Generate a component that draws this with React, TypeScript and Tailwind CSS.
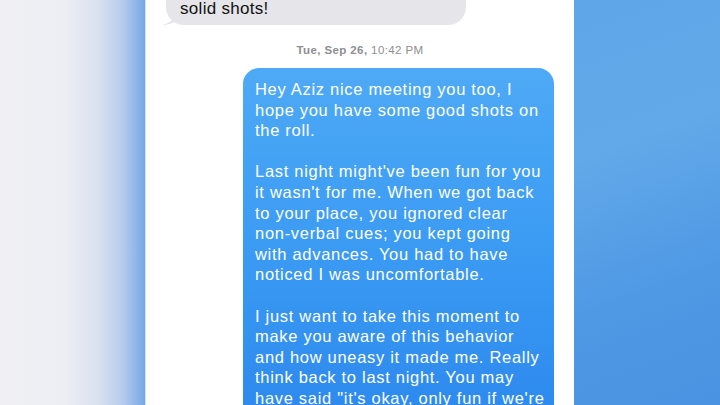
const sent: string[][] = [
  ['Hey Aziz nice meeting you too, I', 'hope you have some good shots on', 'the roll.'],
  [
    "Last night might've been fun for you",
    "it wasn't for me. When we got back",
    'to your place, you ignored clear',
    'non-verbal cues; you kept going',
    'with advances. You had to have',
    'noticed I was uncomfortable.',
  ],
  [
    'I just want to take this moment to',
    'make you aware of this behavior',
    'and how uneasy it made me. Really',
    'think back to last night. You may',
    'have said "it\'s okay, only fun if we\'re',
    'both having fun."',
  ],
];

export default function App() {
  return (
    <div className="flex h-[405px] w-[720px] overflow-hidden font-['Liberation_Sans',sans-serif]">
      {/* blurred left edge */}
      <div className="w-[145px] shrink-0 bg-[linear-gradient(to_right,#f0f0f4_0%,#eceef4_45%,#d9e0ef_68%,#b5cbed_85%,#76a7e6_100%)]" />

      {/* phone screenshot */}
      <div className="flex w-[429px] shrink-0 flex-col bg-white border-l border-[#cfe3fb]">
        <div className="relative ml-[20px] -mt-[31px] w-[300px]">
          <div className="rounded-[18px] bg-[#e5e5ea] px-[14px] pt-[8px] pb-[6px] text-[17px] leading-[21px] tracking-[0.3px] text-[#111]">
            <div>Can&apos;t wait to see if we got some</div>
            <div>solid shots!</div>
          </div>
          <svg className="absolute -left-[4px] bottom-0" width="14" height="12" viewBox="0 0 14 12">
            <path d="M14 0 C12 6 8 10 0 12 C6 12 11 10 14 8 Z" fill="#e5e5ea" />
          </svg>
        </div>

        <div className="mt-[19px] text-center text-[11.5px] leading-[13px] tracking-[0.4px] text-[#8e8e93]">
          <span className="font-semibold">Tue, Sep 26,</span> 10:42 PM
        </div>

        <div className="ml-[97px] mt-[11px] w-[311px] flex-1 rounded-t-[16px] bg-[linear-gradient(to_bottom,#4eaaf6_0%,#3b9bf3_50%,#2c88ee_100%)] px-[12px] pt-[11px] text-[16.5px] leading-[20.6px] tracking-[0.7px] text-white">
          {sent.map((para, i) => (
            <div key={i} className={i > 0 ? 'mt-[20.6px]' : ''}>
              {para.map((line, j) => (
                <div key={j} className="whitespace-nowrap">
                  {line}
                </div>
              ))}
            </div>
          ))}
        </div>
      </div>

      {/* blurred right edge */}
      <div className="flex-1 bg-[linear-gradient(160deg,#5ea6e8_0%,#62a9e9_35%,#4f98e4_70%,#4a93e2_100%)]" />
    </div>
  );
}
